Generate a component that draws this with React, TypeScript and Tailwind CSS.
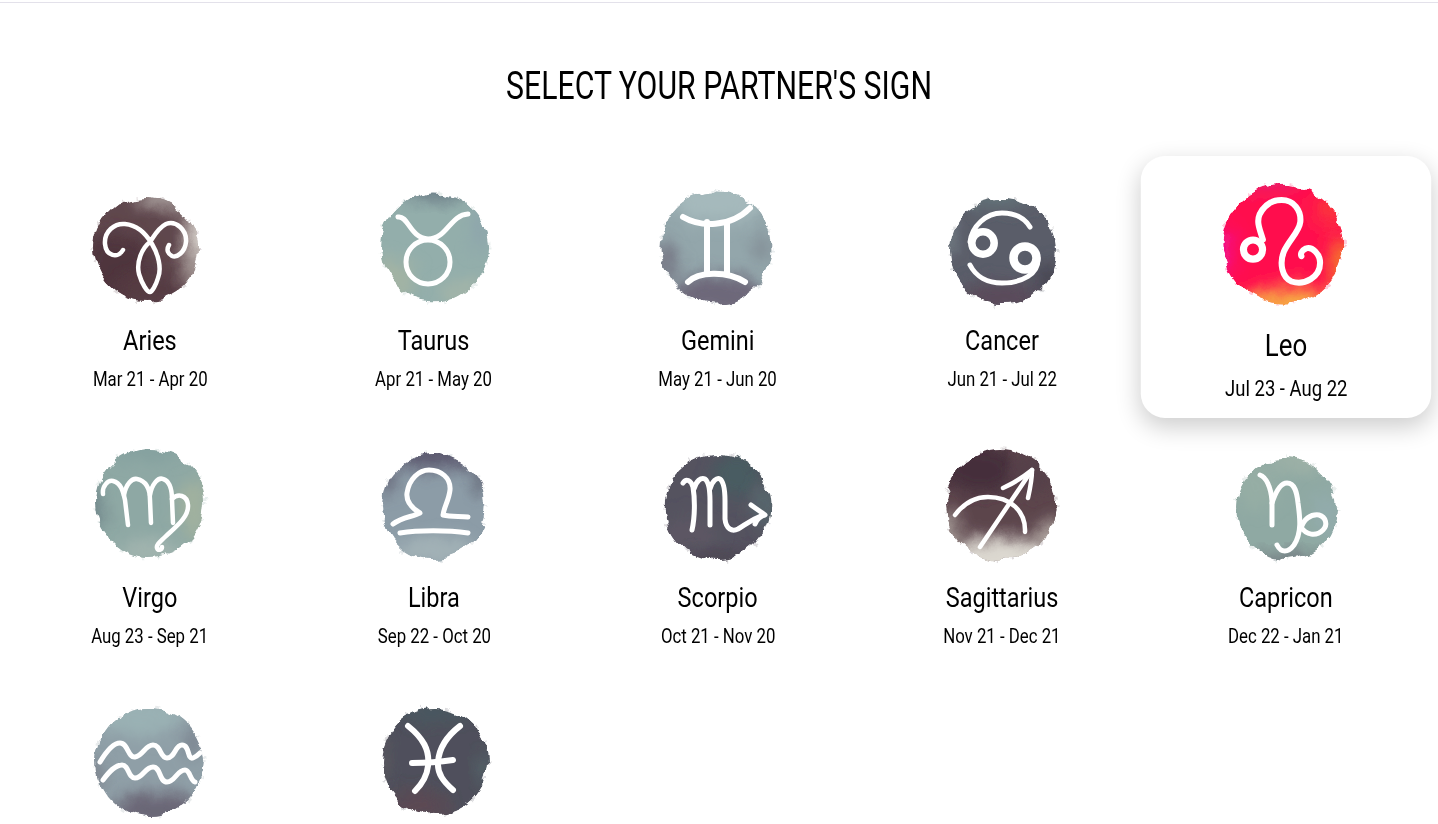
import React from 'react';

type Patch = [number, number, number, number, string];

interface Sign {
  name: string;
  dates: string;
  cx: number;
  cy: number;
  r: number;
  base: string;
  patches: Patch[];
  paths: string[];
  sw: number;
  circles?: [number, number, number, number][];
}

const signs: Sign[] = [
  {
    name: 'Aries', dates: 'Mar 21 - Apr 20', cx: 56, cy: 61, r: 51, base: '#5f474d',
    patches: [[28, 80, 34, 36, '#4f353c'], [60, 100, 34, 16, '#553b43'], [110, 46, 14, 34, '#d6d0ca'], [72, 12, 26, 8, '#b5aeaa'], [102, 84, 8, 18, '#b1a7a3']],
    paths: ['M33 62 C28 71 16 68 15 56 C14 43 25 35 35 36 C46 37 55 44 62 56 C68 66 72 80 68 90 C66 97 62 104 60 104 C57 104 52 96 49 86 C46 74 52 60 60 54 C64 48 68 40 76 36 C86 32 97 42 96 54 C95 64 87 70 82 68 C78 66 76 62 79 57'],
    sw: 4.5,
  },
  {
    name: 'Taurus', dates: 'Apr 21 - May 20', cx: 60, cy: 59.5, r: 53, base: '#93aeab',
    patches: [[62, 4, 36, 8, '#687783'], [18, 92, 24, 22, '#a2b3a4'], [106, 40, 10, 24, '#8ea6ac'], [90, 104, 26, 10, '#a4b5a8']],
    paths: ['M24 29 C34 27 36 50 54 51 C73 51 76 27 94 26'],
    circles: [[54, 74, 22, 5]],
    sw: 5,
  },
  {
    name: 'Gemini', dates: 'May 21 - Jun 20', cx: 58.5, cy: 59.5, r: 55, base: '#93a6ab',
    patches: [[60, 14, 44, 22, '#a5b9bc'], [60, 106, 46, 20, '#6d6879'], [8, 74, 12, 22, '#777986'], [104, 60, 8, 14, '#808a93']],
    paths: ['M25 29 C42 39 72 40 92 20', 'M30 94 C40 84 68 82 87 94', 'M49 34 L49 86', 'M69 34 L69 86'],
    sw: 6,
  },
  {
    name: 'Cancer', dates: 'Jun 21 - Jul 22', cx: 61, cy: 63, r: 52, base: '#5a5d69',
    patches: [[50, 8, 42, 12, '#647278'], [60, 110, 44, 16, '#5a4b5a'], [106, 92, 12, 18, '#4a4753'], [6, 50, 8, 18, '#78848a']],
    paths: ['M28 54 C30 38 44 25 60 25 C72 25 82 29 88 39', 'M96 70 C97 86 80 95 60 95 C46 95 34 89 28 77'],
    circles: [[41, 55, 11.2, 7.5], [83, 70, 11.5, 8.5]],
    sw: 5,
  },
  {
    name: 'Leo', dates: 'Jul 23 - Aug 22', cx: 58, cy: 60, r: 53, base: '#ff0f4e',
    patches: [[0, 66, 10, 24, '#ee10a2'], [66, 114, 44, 14, '#f7ad42'], [112, 80, 12, 28, '#f4772c'], [40, 0, 30, 8, '#d92f82'], [100, 28, 12, 16, '#fb3a3a']],
    paths: ['M39 56 C36 46 33 40 36 33 C41 23 49 20 56 20 C67 20 74 29 73 40 C72 49 63 56 58 67 C54 77 56 90 65 94 C77 98 91 90 91 77 C91 69 84 62 78 64 C74 66 73 69 74 71'],
    circles: [[30, 65, 8.7, 6.5]],
    sw: 5.5,
  },
  {
    name: 'Virgo', dates: 'Aug 23 - Sep 21', cx: 60, cy: 58, r: 53, base: '#8ea8a4',
    patches: [[2, 66, 10, 26, '#6d8287'], [104, 64, 16, 30, '#a0b19f'], [56, 6, 34, 10, '#84a09f'], [60, 106, 34, 10, '#a4b6b0']],
    paths: ['M13 49 C12 41 18 35 23 36 C31 38 33 46 35 55 L38 80', 'M34 50 C36 39 42 33 47 34 C56 36 60 44 60 55 L61 78', 'M60 50 C62 39 68 32 73 34 C80 36 82 45 82 55 L83 78', 'M82 54 C88 48 97 50 98 60 C99 73 83 84 75 92 C70 97 66 100 67 103 C68 106 72 105 72 102'],
    sw: 4.5,
  },
  {
    name: 'Libra', dates: 'Sep 22 - Oct 20', cx: 60, cy: 61, r: 51, base: '#8c9ca7',
    patches: [[62, 10, 46, 14, '#5b586e'], [108, 32, 8, 18, '#5f6272'], [60, 104, 40, 12, '#a4b4b8'], [12, 34, 10, 16, '#666779']],
    paths: ['M19 79 C28 72 38 72 46 68 C36 62 32 56 33 48 C35 34 45 25 55 25 C67 25 77 33 76 45 C75 55 70 62 69 70 C77 72 86 71 94 72', 'M26 88 C44 85 74 85 94 88'],
    sw: 5,
  },
  {
    name: 'Scorpio', dates: 'Oct 21 - Nov 20', cx: 59.5, cy: 62, r: 52, base: '#54525f',
    patches: [[78, 30, 24, 24, '#4a5b62'], [30, 90, 30, 20, '#5c5664'], [106, 60, 10, 24, '#586a70'], [60, 114, 34, 8, '#4d4753']],
    paths: ['M25 38 C28 33 33 35 35 42 C37 54 37 72 34 85', 'M36 44 C38 36 43 32 47 34 C51 37 52 46 52 56 L52 80', 'M52 44 C54 36 59 32 62 34 C66 37 67 46 67 56 L67 74 C68 84 74 87 80 84 C87 80 92 75 105 70', 'M93 60 C97 63 102 66 107 70 C102 71 99 74 97 79'],
    sw: 5,
  },
  {
    name: 'Sagittarius', dates: 'Nov 21 - Dec 21', cx: 59, cy: 60, r: 54, base: '#5c454c',
    patches: [[38, 24, 36, 24, '#452f3a'], [60, 116, 54, 24, '#dcd8d0'], [6, 86, 12, 18, '#a89f9a'], [110, 92, 16, 16, '#b5aca6'], [90, 30, 18, 18, '#55414a']],
    paths: ['M38 102 L90 25', 'M61 43 C70 39 80 33 90 25 C90 34 88 44 86 53', 'M13 70 C22 58 34 52 46 52 C68 52 84 66 83 87'],
    sw: 4.5,
  },
  {
    name: 'Capricon', dates: 'Dec 22 - Jan 21', cx: 60, cy: 64, r: 49, base: '#8fa9a3',
    patches: [[60, 114, 34, 6, '#6b6d76'], [30, 40, 24, 24, '#95ada4'], [100, 70, 10, 24, '#93acad'], [74, 16, 28, 8, '#a1b3a7']],
    paths: ['M34 30 C40 32 45 42 46 56 L46 80', 'M46 58 C50 46 55 38 61 38 C69 38 71 48 72 58 C74 72 76 88 68 100 C62 108 55 108 51 100', 'M75 84 C77 74 85 69 93 70 C100 72 102 80 97 85 C90 92 80 90 75 82'],
    sw: 5,
  },
  {
    name: 'Aquarius', dates: '', cx: 60, cy: 60, r: 53, base: '#8f9fa7',
    patches: [[50, 14, 44, 20, '#9ab1b4'], [66, 108, 44, 18, '#6b6676'], [6, 72, 8, 12, '#777984'], [104, 40, 10, 16, '#7c8490']],
    paths: ['M10 60 C16 50 23 41 30 41 C38 41 38 56 45 55 C53 54 55 43 63 43 C71 43 70 56 77 56 C85 56 85 43 92 43 C100 43 97 58 103 56 C106 55 108 53 110 51', 'M13 78 C19 70 25 63 32 63 C39 63 38 76 45 76 C53 76 55 65 63 65 C71 65 69 80 77 80 C85 80 87 68 95 68 C100 68 100 78 105 80'],
    sw: 5,
  },
  {
    name: 'Pisces', dates: '', cx: 61, cy: 59, r: 52, base: '#4f505b',
    patches: [[60, 10, 36, 10, '#4a5860'], [40, 104, 36, 14, '#5b4a53'], [6, 56, 8, 24, '#5a565e'], [110, 66, 6, 14, '#55696e']],
    paths: ['M34 24 C49 36 56 48 54 64 C53 74 48 82 41 89', 'M86 24 C73 34 65 46 64 60 C63 72 70 80 79 88', 'M38 61 C52 61 66 60 79 58'],
    sw: 6,
  },
];

const SignImage: React.FC<{ sign: Sign; seed: number }> = ({ sign, seed }) => {
  const roughId = `rough-${seed}`;
  const clipId = `clip-${seed}`;
  return (
    <svg viewBox="0 0 120 120" className="w-[120px] h-[120px] overflow-visible blur-[0.5px]">
      <defs>
        <filter id={roughId} x="-20%" y="-20%" width="140%" height="140%">
          <feTurbulence type="fractalNoise" baseFrequency="0.05" numOctaves={5} seed={seed + 3} result="noise" />
          <feDisplacementMap in="SourceGraphic" in2="noise" scale={11} xChannelSelector="R" yChannelSelector="G" />
          <feGaussianBlur stdDeviation={0.7} />
        </filter>
        <filter id={`soft-${seed}`} x="-80%" y="-80%" width="260%" height="260%">
          <feGaussianBlur stdDeviation={8} />
        </filter>
        <clipPath id={clipId}>
          <circle cx={sign.cx} cy={sign.cy} r={sign.r + 1} />
        </clipPath>
      </defs>
      <g filter={`url(#${roughId})`}>
        {/* dry brush wisps round the edge */}
        <circle
          cx={sign.cx}
          cy={sign.cy}
          r={sign.r + 2}
          fill="none"
          stroke={sign.base}
          strokeWidth={3}
          strokeDasharray="2 14 1 23 4 31"
          opacity={0.2}
        />
        <g clipPath={`url(#${clipId})`}>
          <circle cx={sign.cx} cy={sign.cy} r={sign.r + 1} fill={sign.base} />
          {sign.patches.map((p, i) => (
            <ellipse key={i} cx={p[0]} cy={p[1]} rx={p[2]} ry={p[3]} fill={p[4]} filter={`url(#soft-${seed})`} />
          ))}
        </g>
      </g>
      <g fill="none" stroke="#fff" strokeWidth={sign.sw} strokeLinecap="round" strokeLinejoin="round">
        {sign.paths.map((d, i) => (
          <path key={i} d={d} />
        ))}
        {sign.circles?.map((c, i) => (
          <circle key={i} cx={c[0]} cy={c[1]} r={c[2]} strokeWidth={c[3]} />
        ))}
      </g>
    </svg>
  );
};

export default function App() {
  return (
    <div className="h-[824px] overflow-hidden bg-white text-black font-['Roboto',sans-serif]">
      <div className="h-[2px]" />
      <div className="border-t border-[#e3e1ea]" />
      <h1 className="mt-[59px] h-12 text-center text-[38px] leading-[48px] font-normal scale-x-[0.796]">SELECT YOUR PARTNER'S SIGN</h1>

      <div className="mt-[57.5px] pl-2 grid grid-cols-[repeat(5,284px)] gap-y-[19px]">
        {signs.map((sign, idx) => (
          <div key={sign.name} className="flex justify-center">
            <div
              className={`w-[264px] h-[238px] pt-5 flex flex-col items-center rounded-[22px] bg-white ${
                sign.name === 'Leo' ? 'scale-110 shadow-[0_8px_22px_rgba(0,0,0,0.2)]' : ''
              }`}
            >
              <SignImage sign={sign} seed={idx} />
              {/* last row's labels sit below the fold */}
              {sign.dates && (
                <>
                  <div className="mt-[17px] text-[28px] leading-8 scale-x-[0.84]">{sign.name}</div>
                  <div className="mt-2 text-[20px] leading-7 scale-x-[0.84]">{sign.dates}</div>
                </>
              )}
            </div>
          </div>
        ))}
      </div>
    </div>
  );
}
